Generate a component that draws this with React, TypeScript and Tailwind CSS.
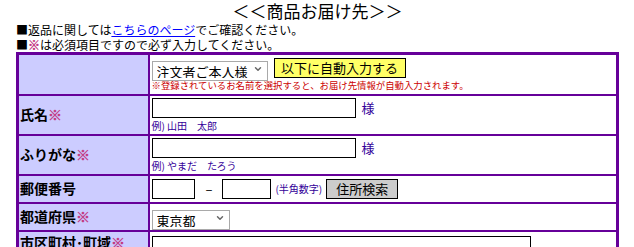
import { ChevronDown } from "lucide-react"

function Star() {
  return <span className="font-black text-[#c2307e] [-webkit-text-stroke:0.4px_#c2307e]">※</span>
}

function Select({ value, width }: { value: string; width: string }) {
  return (
    <div className={`relative h-[20px] ${width}`}>
      <select
        defaultValue={value}
        className="h-full w-full appearance-none border border-[#a9a9a9] bg-white pl-[4px] text-[13px] leading-none text-black outline-none"
      >
        <option>{value}</option>
      </select>
      <ChevronDown
        size={10}
        strokeWidth={3.5}
        className="pointer-events-none absolute right-[5px] top-[6px] text-[#666]"
      />
    </div>
  )
}

export default function App() {
  const label = "w-[131px] border-2 border-[#660099] bg-[#ccccff] pl-[1px] text-left align-middle text-[14px] font-bold text-black"
  const cell = "border-2 border-[#660099] bg-white px-[2px] py-0 align-middle"
  const input = "h-[20px] border border-black bg-white outline-none"
  const note = "text-[10px] leading-[11px] text-[#330099]"

  return (
    <div className="h-[247px] overflow-hidden bg-white font-['Noto_Sans_CJK_JP',sans-serif] text-black">
      <div className="ml-[16px] w-[603px]">
        <h1 className="text-center text-[17px] leading-[22px]">＜＜商品お届け先＞＞</h1>
        <p className="text-[12px] leading-[15px]">
          ■返品に関しては
          <a href="#" className="text-[#0000ff] underline">
            こちらのページ
          </a>
          でご確認ください。
        </p>
        <p className="text-[12px] leading-[15px]">
          ■<Star />は必須項目ですので必ず入力してください。
        </p>

        <table className="w-[603px] border-collapse border-[3px] border-[#660099]">
          <tbody>
            <tr className="h-[41px]">
              <td className={label}></td>
              <td className={cell}>
                <div className="flex items-center gap-[6px]">
                  <Select value="注文者ご本人様" width="w-[116px]" />
                  <button className="h-[20px] w-[132px] border border-black bg-[#ffff66] text-[13px] leading-none">
                    以下に自動入力する
                  </button>
                </div>
                <p className="mt-[1px] text-[9.4px] leading-[12px] text-[#cc0000]">
                  ※登録されているお名前を選択すると、お届け先情報が自動入力されます。
                </p>
              </td>
            </tr>

            <tr className="h-[40px]">
              <td className={label}>
                氏名<Star />
              </td>
              <td className={cell}>
                <div className="flex items-center gap-[6px]">
                  <input className={`${input} w-[204px]`} />
                  <span className="text-[13px] text-[#330099]">様</span>
                </div>
                <p className={`${note} mt-[2px]`}>例) 山田　太郎</p>
              </td>
            </tr>

            <tr className="h-[40px]">
              <td className={label}>
                ふりがな<Star />
              </td>
              <td className={cell}>
                <div className="flex items-center gap-[6px]">
                  <input className={`${input} w-[204px]`} />
                  <span className="text-[13px] text-[#330099]">様</span>
                </div>
                <p className={`${note} mt-[2px]`}>例) やまだ　たろう</p>
              </td>
            </tr>

            <tr className="h-[28px]">
              <td className={label}>郵便番号</td>
              <td className={cell}>
                <div className="flex items-center">
                  <input className={`${input} w-[43px]`} />
                  <span className="ml-[11px] mr-[10px] text-[13px]">–</span>
                  <input className={`${input} w-[49px]`} />
                  <span className="ml-[4px] text-[10px] text-[#330099]">(半角数字)</span>
                  <button className="ml-[4px] h-[20px] w-[72px] border border-black bg-[#cccccc] text-[13px] leading-none">
                    住所検索
                  </button>
                </div>
              </td>
            </tr>

            <tr className="h-[28px]">
              <td className={label}>
                都道府県<Star />
              </td>
              <td className={cell}>
                <Select value="東京都" width="w-[78px]" />
              </td>
            </tr>

            <tr className="h-[30px]">
              <td className={`${label} align-top`}>
                市区町村･町域<Star />
              </td>
              <td className={`${cell} pt-[2px] align-top`}>
                <input className={`${input} w-[379px]`} />
              </td>
            </tr>
          </tbody>
        </table>
      </div>
    </div>
  )
}
